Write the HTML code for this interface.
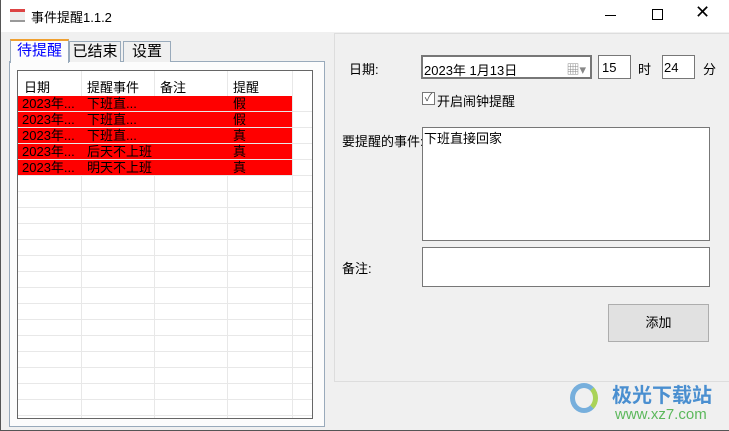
<!DOCTYPE html><html><head><meta charset="utf-8"><style>
*{box-sizing:border-box;margin:0;padding:0}
body{width:729px;height:431px;background:#f0f0f0;font-family:"Liberation Sans","Noto Sans CJK SC",sans-serif;font-size:13px;position:relative;overflow:hidden}
.a{position:absolute}
.title{left:0;top:0;width:729px;height:32px;background:#fff}
.tab{top:41px;height:21px;border:1px solid #9ab;border-bottom:none;background:#f0f0f0;font-size:15px;text-align:center;line-height:19px}
.box{background:#fff;border:1px solid #777}
.row{left:18px;width:274px;height:15px;background:#f00;font-size:13px;line-height:15px}
.row span{position:absolute;top:0}
.vl{top:71px;width:1px;height:347px;background:#e8e8e8}
.hl{left:18px;width:294px;height:1px;background:#e8e8e8}
</style></head><body>
<div class="a title"></div>
<div class="a" style="left:0;top:0;width:1px;height:431px;background:#555"></div>
<div class="a" style="left:0;top:430px;width:729px;height:1px;background:#555"></div>
<div class="a" style="left:10px;top:9px;width:15px;height:13px;border-top:3px solid #d44;background:#eee;border-bottom:2px solid #999"></div>
<div class="a" style="left:31px;top:7px;font-size:13px">事件提醒1.1.2</div>
<div class="a" style="left:605px;top:15px;width:11px;height:1px;background:#000"></div>
<div class="a" style="left:652px;top:9px;width:11px;height:11px;border:1px solid #000"></div>
<div class="a" style="left:695px;top:2px;font-size:18px">✕</div>
<div class="a" style="left:9px;top:61px;width:316px;height:366px;border:1px solid #9ab;background:#fcfcfc"></div>
<div class="a tab" style="left:10px;top:39px;width:59px;height:24px;background:#fcfcfc;color:#00f;border-top:2px solid #f0a030;z-index:2">待提醒</div>
<div class="a tab" style="left:69px;width:52px">已结束</div>
<div class="a tab" style="left:123px;width:48px">设置</div>
<div class="a" style="left:17px;top:70px;width:296px;height:349px;background:#fff;border:1px solid #666"></div>
<div class="a vl" style="left:81px"></div><div class="a vl" style="left:154px"></div><div class="a vl" style="left:227px"></div><div class="a vl" style="left:292px"></div>
<div class="a hl" style="top:111px"></div><div class="a hl" style="top:127px"></div><div class="a hl" style="top:143px"></div><div class="a hl" style="top:159px"></div><div class="a hl" style="top:175px"></div>
<div class="a hl" style="top:191px"></div><div class="a hl" style="top:207px"></div><div class="a hl" style="top:223px"></div><div class="a hl" style="top:239px"></div><div class="a hl" style="top:255px"></div><div class="a hl" style="top:271px"></div><div class="a hl" style="top:287px"></div><div class="a hl" style="top:303px"></div><div class="a hl" style="top:319px"></div><div class="a hl" style="top:335px"></div><div class="a hl" style="top:351px"></div><div class="a hl" style="top:367px"></div><div class="a hl" style="top:383px"></div><div class="a hl" style="top:399px"></div><div class="a hl" style="top:415px"></div>
<div class="a" style="left:24px;top:77px">日期</div><div class="a" style="left:87px;top:77px">提醒事件</div><div class="a" style="left:160px;top:77px">备注</div><div class="a" style="left:233px;top:77px">提醒</div>
<div class="a row" style="top:96px"><span style="left:4px">2023年...</span><span style="left:69px">下班直...</span><span style="left:215px">假</span></div>
<div class="a row" style="top:112px"><span style="left:4px">2023年...</span><span style="left:69px">下班直...</span><span style="left:215px">假</span></div>
<div class="a row" style="top:128px"><span style="left:4px">2023年...</span><span style="left:69px">下班直...</span><span style="left:215px">真</span></div>
<div class="a row" style="top:144px"><span style="left:4px">2023年...</span><span style="left:69px">后天不上班</span><span style="left:215px">真</span></div>
<div class="a row" style="top:160px"><span style="left:4px">2023年...</span><span style="left:69px">明天不上班</span><span style="left:215px">真</span></div>
<div class="a" style="left:334px;top:33px;width:400px;height:349px;border:1px solid #ddd"></div>
<div class="a" style="left:349px;top:59px">日期:</div>
<div class="a box" style="left:421px;top:55px;width:171px;height:24px;border:2px solid #777;padding:3px 1px">2023年 1月13日<span style="position:absolute;right:4px;top:2px;color:#888">▦▾</span></div>
<div class="a box" style="left:598px;top:55px;width:33px;height:24px;padding:4px 3px">15</div>
<div class="a" style="left:638px;top:59px">时</div>
<div class="a box" style="left:662px;top:55px;width:33px;height:24px;padding:4px 1px">24</div>
<div class="a" style="left:703px;top:59px">分</div>
<div class="a box" style="left:422px;top:92px;width:13px;height:13px;font-size:11px;line-height:11px;text-align:center;color:#555">✓</div>
<div class="a" style="left:437px;top:91px">开启闹钟提醒</div>
<div class="a" style="left:342px;top:131px">要提醒的事件:</div>
<div class="a box" style="left:422px;top:127px;width:288px;height:114px;padding:0 1px">下班直接回家</div>
<div class="a" style="left:342px;top:258px">备注:</div>
<div class="a box" style="left:422px;top:247px;width:288px;height:40px"></div>
<div class="a" style="left:608px;top:304px;width:101px;height:38px;border:1px solid #adadad;background:#e1e1e1;text-align:center;line-height:36px">添加</div>
<div class="a" style="left:570px;top:383px;width:28px;height:30px;border-radius:50%;border:5px solid #5a9fd8;border-right-color:#9c3;opacity:.8"></div>
<div class="a" style="left:612px;top:379px;font-size:20px;font-weight:bold;color:#4a8fd0">极光下载站</div>
<div class="a" style="left:615px;top:406px;font-size:15px;color:#5cb85c">www.xz7.com</div>
</body></html>
